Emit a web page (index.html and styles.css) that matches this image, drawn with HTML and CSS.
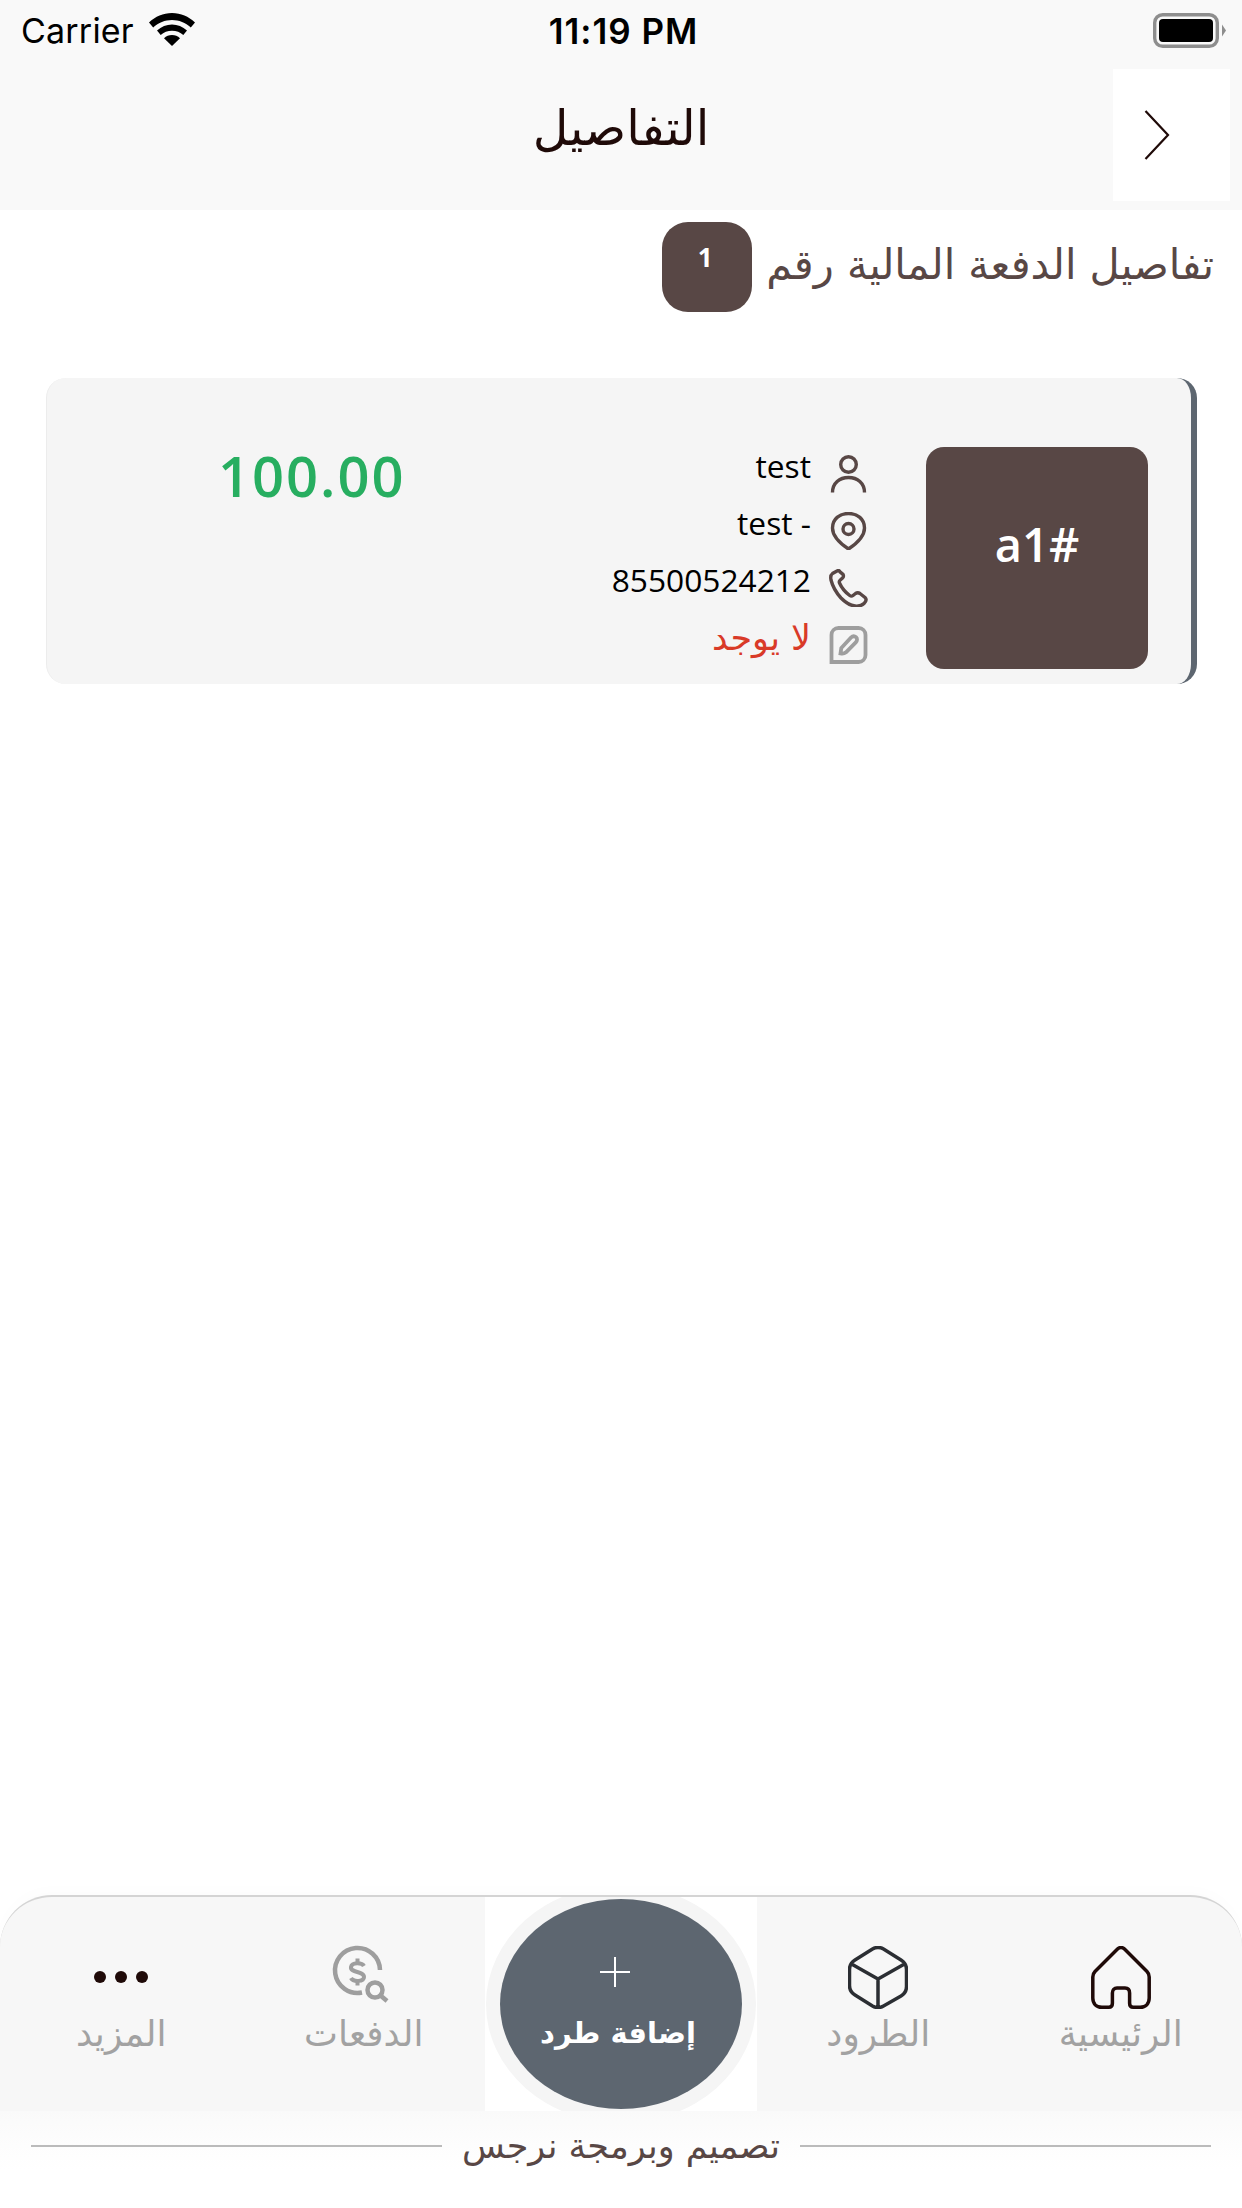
FILE: index.html
```html
<!DOCTYPE html>
<html lang="ar">
<head>
<meta charset="utf-8">
<title>التفاصيل</title>
<link rel="stylesheet" href="styles.css">
</head>
<body>
<div class="phone">
  <header class="top">
    <div class="status">
      <div class="status-left">
        <span class="carrier">Carrier</span>
        <svg class="wifi" viewBox="0 0 46 33"><path d="M23 0C14 0 6.500 3.500 0 9.500l4.200 5C9.500 9.700 16 7 23 7s13.500 2.700 18.800 7.500l4.200-5C39.500 3.500 32 0 23 0Z"/><path d="M23 11.500c-5.600 0-10.600 2.200-15 6l3.700 4.500c3-2.700 7-4.200 11.300-4.200s8.300 1.500 11.300 4.200l3.700-4.500c-4.400-3.800-9.400-6-15-6Z"/><path d="M23 22c-3.100 0-5.700 1.100-8 3.200L23 33l8-7.800c-2.300-2.100-4.900-3.200-8-3.200Z"/></svg>
      </div>
      <span class="time">11:19 PM</span>
      <svg class="battery" viewBox="0 0 73 35"><rect x="1.700" y="1.700" width="62.600" height="31.600" rx="8" fill="none" stroke="#8e8e8e" stroke-width="3.400"/><rect x="6" y="6" width="54" height="23" rx="4" fill="#000"/><path d="M69 11.500l4 6-4 6Z" fill="#8e8e8e"/></svg>
    </div>
    <div class="nav">
      <h1 class="title">التفاصيل</h1>
      <button class="back" type="button" aria-label="رجوع">
        <svg viewBox="0 0 26 50"><path d="M1.500 1l22.500 24-22.500 24" fill="none" stroke="#1f0a08" stroke-width="2.200"/></svg>
      </button>
    </div>
  </header>

  <main class="content">
    <div class="heading">
      <span class="heading-text">تفاصيل الدفعة المالية رقم</span>
      <span class="badge"><span>1</span></span>
    </div>

    <article class="card">
      <div class="thumb">a1#</div>
      <ul class="rows">
        <li class="row">
          <svg class="ico" viewBox="0 0 38 38"><circle cx="19" cy="9.500" r="7.800"/><path d="M3 37.500c0-9.500 7-15 16-15s16 5.500 16 15"/></svg>
          <span class="val">test</span>
        </li>
        <li class="row">
          <svg class="ico" viewBox="0 0 38 38"><path d="M19 37C13 33 3 25.500 3 16 3 7 10 1.500 19 1.500S35 7 35 16C35 25.500 25 33 19 37Z"/><circle cx="19" cy="17" r="5.500"/></svg>
          <span class="val">test -</span>
        </li>
        <li class="row">
          <svg class="ico" viewBox="0 0 38 38"><path d="M8 1.800 3 4.500C1 6 1 8.500 1.500 11c2 8 5.500 13 10 18 4 4 9 7.500 14 8 3 .3 6.500 0 9-2.500 2.500-2.500 2.500-4.500 1-6l-5-4c-1.500-1-3-1-4.500 0l-2.500 2c-1 .8-2.200.8-3.300 0-4-3-8-7.500-10.200-12.500-.5-1.200-.2-2.200.8-3l2.200-2c1-1 1.200-2.300.5-3.600L10.500 2.800C9.800 1.500 9 1.300 8 1.800Z"/></svg>
          <span class="val">85500524212</span>
        </li>
        <li class="row">
          <svg class="ico ico-grey" viewBox="0 0 38 38"><path d="M9 2h20c4 0 7 3 7 7v20c0 4-3 7-7 7H2V9C2 5 5 2 9 2Z"/><path d="M11 27.500l.8-5.500 9.700-10.500c1.500-1.500 3.500-1.700 5-.3 1.500 1.400 1.300 3.600-.2 5.100l-9.800 10c-1.800 1.500-4 1.500-5.500 1.200Z"/></svg>
          <span class="val val-red">لا يوجد</span>
        </li>
      </ul>
      <div class="amount">100.00</div>
    </article>
  </main>

  <footer class="bottom">
    <nav class="tabs">
      <a class="tab">
        <svg class="tab-ico" viewBox="0 0 60 63"><path d="M26.500 3 4 25.500C2.500 27 1.800 29 1.800 31v21c0 5.500 3.500 9.200 9 9.200h7c2.500 0 3.600-1.500 3.600-4V47c0-3 1.800-5 4.600-5h8c3 0 4.600 2 4.600 5v10.200c0 2.500 1.100 4 3.600 4h7c5.500 0 9-3.700 9-9.200V31c0-2-.7-4-2.200-5.500L33.500 3c-2-2-5-2-7 0Z" fill="none" stroke="#1f0a08" stroke-width="3.500"/></svg>
        <span class="tab-label">الرئيسية</span>
      </a>
      <a class="tab">
        <svg class="tab-ico" viewBox="0 0 60 63"><path d="M24.500 3 7 14c-3.500 2.200-5.500 5.500-5.500 9.500v16c0 4 2 7.300 5.500 9.500l17.500 11c3.500 2 7.500 2 11 0L53 50c3.500-2.200 5.500-5.500 5.500-9.500v-17c0-4-2-7.300-5.500-9.500L35.500 3c-3.500-2-7.500-2-11 0Z M3.500 18 30 33 56.500 18 M30 33v29" fill="none" stroke="#2b2e33" stroke-width="3.500"/></svg>
        <span class="tab-label">الطرود</span>
      </a>
      <div class="fab-slot">
        <button class="fab" type="button">
          <svg class="plus" viewBox="0 0 30 30"><path d="M15 0v30M0 15h30" stroke="#fff" stroke-width="2" fill="none"/></svg>
          <span class="fab-label">إضافة طرد</span>
        </button>
      </div>
      <a class="tab">
        <svg class="tab-pay" viewBox="0 0 80 75"><g fill="none" stroke="#9e9e9e" stroke-width="4.500" stroke-linecap="butt"><path d="M60 35A22.500 22.500 0 1 0 42 57.500"/><path d="M44 31c-2-3.500-12-4-13 1-1 6 13 4 13 10 0 5-11 5-13 1" stroke-width="4"/><path d="M37.500 23.500v4M37.500 46.500v4" stroke-width="4"/><circle cx="55" cy="55" r="7.500"/><path d="M60.500 60.500l6.500 5.500"/></g></svg>
        <span class="tab-label">الدفعات</span>
      </a>
      <a class="tab">
        <span class="tab-ico dots"><i></i><i></i><i></i></span>
        <span class="tab-label">المزيد</span>
      </a>
    </nav>
    <div class="credit">
      <span class="credit-line"></span>
      <span class="credit-text">تصميم وبرمجة نرجس</span>
      <span class="credit-line"></span>
    </div>
  </footer>
</div>
</body>
</html>
```
FILE: styles.css
```css
* { box-sizing: border-box; margin: 0; padding: 0; }
html, body { width: 1242px; height: 2208px; background: #fff; overflow: hidden; }
.phone {
  width: 1242px;
  height: 2208px;
  display: flex;
  flex-direction: column;
  font-family: "DejaVu Sans", "Noto Sans", sans-serif;
}

/* top */
.top { height: 210px; background: #f9f9f9; flex: none; }
.status {
  height: 62px;
  padding: 0 16px 0 21px;
  display: grid;
  grid-template-columns: 1fr auto 1fr;
  align-items: center;
  font-family: Inter, "Liberation Sans", sans-serif;
  color: #000;
}
.status-left { display: flex; align-items: center; gap: 15px; }
.carrier { font-size: 34px; line-height: 40px; letter-spacing: .2px; }
.wifi { width: 46px; height: 33px; margin-top: -4px; fill: #000; }
.time { font-size: 35px; font-weight: 600; line-height: 40px; letter-spacing: 1px; }
.battery { width: 73px; height: 35px; justify-self: end; margin-top: -1px; }
.nav {
  height: 148px;
  padding: 7px 12px 9px 0;
  display: flex;
  justify-content: flex-end;
  position: relative;
}
.title {
  position: absolute;
  left: 0;
  right: 0;
  top: 37px;
  text-align: center;
  font-size: 49px;
  font-weight: 400;
  line-height: 60px;
  color: #1f0a08;
  white-space: nowrap;
}
.back {
  width: 117px;
  height: 132px;
  border: 0;
  background: #fff;
  display: flex;
  align-items: center;
  padding-left: 31px;
  position: relative;
}
.back svg { width: 26px; height: 50px; }

/* content */
.content { flex: 1; padding: 12px 28px 0 46px; direction: ltr; }
.heading {
  display: flex;
  flex-direction: row-reverse;
  align-items: center;
  gap: 14px;
  height: 90px;
}
.heading-text { direction: rtl; font-size: 41.500px; color: #584745; line-height: 50px; margin-top: -4px; white-space: nowrap; }
.badge {
  width: 90px;
  height: 90px;
  border-radius: 26px;
  background: #584745;
  color: #fff;
  display: flex;
  justify-content: center;
  padding: 20px 4px 0 0;
  font-family: "Open Sans", sans-serif;
  font-size: 26px;
  font-weight: 700;
  line-height: 30px;
}
.card {
  width: 1151px;
  height: 306px;
  margin-top: 66px;
  background: #f5f5f5;
  border-radius: 20px;
  border-left: 1px solid #ececec;
  border-right: 6px solid #5d6670;
  position: relative;
  display: flex;
  flex-direction: row-reverse;
  padding: 69px 43px 15px 0;
  font-family: "Open Sans", sans-serif;
}
.thumb {
  width: 222px;
  height: 222px;
  flex: none;
  border-radius: 18px;
  background: #584745;
  color: #fff;
  font-size: 47px;
  font-weight: 600;
  line-height: 60px;
  text-align: center;
  padding-top: 67px;
}
.rows {
  list-style: none;
  width: 337px;
  margin: 8px 58px 0 0;
  flex: none;
  display: flex;
  flex-direction: column;
  gap: 19px;
}
.row {
  height: 38px;
  display: flex;
  flex-direction: row-reverse;
  align-items: center;
  gap: 18px;
}
.ico { width: 39px; height: 38px; flex: none; fill: none; stroke: #584745; stroke-width: 3.400; }
.ico-grey { stroke: #9e9e9e; stroke-width: 3.800; }
.val { font-size: 31.700px; line-height: 38px; color: #000; margin-top: -16px; white-space: nowrap; }
.val-red { color: #d93a28; font-family: "DejaVu Sans", sans-serif; font-size: 35px; direction: rtl; margin-top: -14px; }
.amount {
  position: absolute;
  left: 171px;
  top: 59px;
  font-size: 56px;
  line-height: 76px;
  font-weight: 600;
  letter-spacing: 2px;
  color: #27ae60;
}

/* bottom */
.bottom { flex: none; height: 313px; }
.tabs {
  height: 216px;
  display: flex;
  flex-direction: row-reverse;
  background: #f7f7f7;
  border-top: 2px solid #d4d4d4;
  border-radius: 52px 52px 0 0;
  box-shadow: 0 -6px 14px rgba(0,0,0,.012);
}
.tab {
  width: 242.500px;
  flex: none;
  display: flex;
  flex-direction: column;
  align-items: center;
  padding-top: 49px;
}
.tab-ico { width: 60px; height: 63px; flex: none; }
.tab-pay { width: 80px; height: 75px; flex: none; margin: -11px 0 -1px -8px; }
.dots { display: flex; justify-content: space-between; align-items: center; width: 54px; }
.dots i { width: 12px; height: 12px; border-radius: 50%; background: #1f0a08; margin-top: -1px; }
.tab-label { font-size: 36px; line-height: 50px; margin-top: 0; color: #a2a2a2; direction: rtl; white-space: nowrap; }
.fab-slot {
  width: 272px;
  flex: none;
  background: #fff;
  overflow: hidden;
  display: flex;
  justify-content: center;
  align-items: center;
}
.fab {
  width: 242px;
  height: 210px;
  flex: none;
  border: 0;
  border-radius: 50%;
  background: #5d6670;
  box-shadow: 0 0 0 14px #f5f5f5;
  display: flex;
  flex-direction: column;
  align-items: center;
  color: #fff;
  padding-top: 58px;
  font-family: "DejaVu Sans", sans-serif;
}
.plus { width: 30px; height: 30px; margin-left: -12px; }
.fab-label { font-size: 29px; font-weight: 700; line-height: 44px; margin-top: 24px; margin-left: -6px; direction: rtl; white-space: nowrap; }
.credit {
  display: flex;
  gap: 20px;
  padding: 12px 31px 0;
  background: linear-gradient(#fafafa, #fff 60%);
  height: 97px;
  align-items: flex-start;
}
.credit-line { flex: 1; height: 2px; background: #bbb; margin-top: 22px; }
.credit-text { font-size: 35px; line-height: 46px; color: #584745; direction: rtl; white-space: nowrap; }
```
